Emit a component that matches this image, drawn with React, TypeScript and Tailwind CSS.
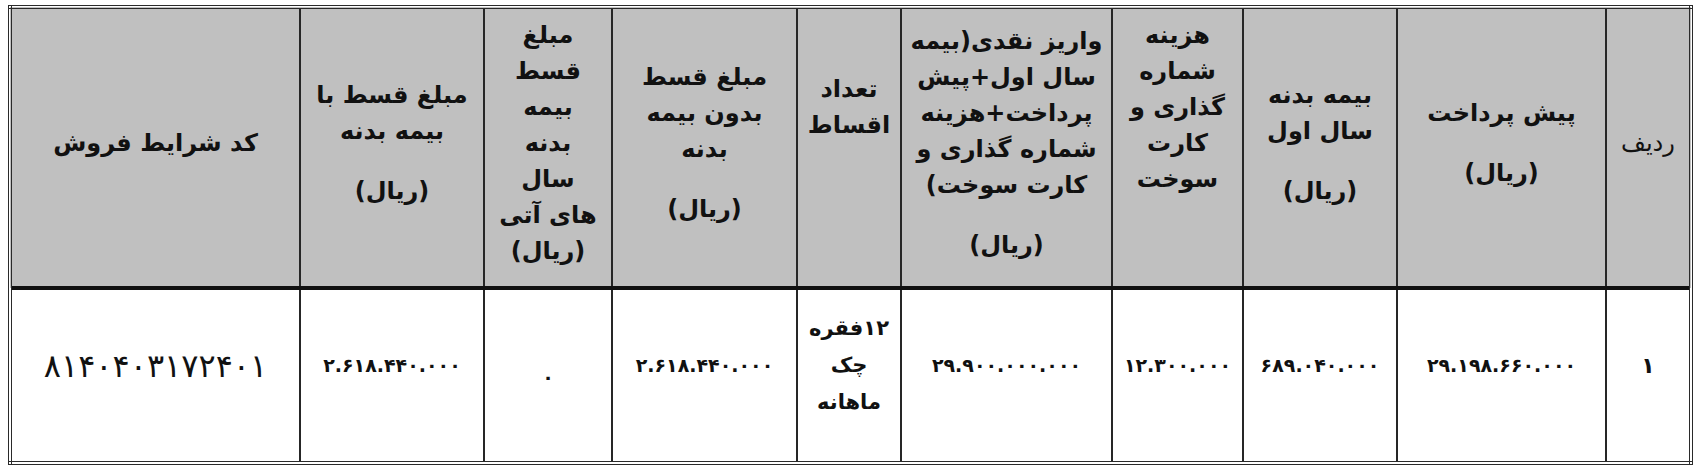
const cols = [85, 209, 154, 131, 211, 104, 185, 128, 184, 290]

type Head = { lines: string[]; rial?: "gap" | "tight"; blank?: number; regular?: boolean }

const heads: Head[] = [
  { lines: ["ردیف"], regular: true },
  { lines: ["پیش پرداخت"], rial: "gap" },
  { lines: ["بیمه بدنه", "سال اول"], rial: "gap" },
  { lines: ["هزینه", "شماره", "گذاری و", "کارت", "سوخت"], blank: 2 },
  { lines: ["واریز نقدی(بیمه", "سال اول+پیش", "پرداخت+هزینه", "شماره گذاری و", "کارت سوخت)"], rial: "gap" },
  { lines: ["تعداد", "اقساط"], blank: 2 },
  { lines: ["مبلغ قسط", "بدون بیمه", "بدنه"], rial: "gap" },
  { lines: ["مبلغ", "قسط", "بیمه", "بدنه", "سال", "های آتی"], rial: "tight" },
  { lines: ["مبلغ قسط با", "بیمه بدنه"], rial: "gap" },
  { lines: ["کد شرایط فروش"] },
]

const row = [
  "۱",
  "۲۹.۱۹۸.۶۶۰.۰۰۰",
  "۶۸۹.۰۴۰.۰۰۰",
  "۱۲.۳۰۰.۰۰۰",
  "۲۹.۹۰۰.۰۰۰.۰۰۰",
  "",
  "۲.۶۱۸.۴۴۰.۰۰۰",
  "۰",
  "۲.۶۱۸.۴۴۰.۰۰۰",
  "۸۱۴۰۴۰۳۱۷۲۴۰۱",
]

export default function App() {
  return (
    <div className="w-[1701px] h-[473px] bg-white pt-[5px] pl-[8px] font-['DejaVu_Sans',sans-serif] text-[#111]">
      <table
        dir="rtl"
        className="table-fixed border-collapse border-[4px] border-double border-[#2a2a2a] w-[1681px]"
      >
        <colgroup>
          {cols.map((w, i) => (
            <col key={i} style={{ width: w }} />
          ))}
        </colgroup>
        <thead>
          <tr className="h-[281px] bg-[#c0c0c0]">
            {heads.map((h, i) => (
              <th
                key={i}
                className={`border-2 border-b-[4px] border-[#262626] border-b-[#111] align-middle text-center px-1 pb-[10px] text-[24px] leading-[36px] ${
                  h.regular ? "font-normal" : "font-bold"
                }`}
              >
                {h.lines.map((l, j) => (
                  <div key={j} className="whitespace-nowrap">
                    {l}
                  </div>
                ))}
                {h.rial === "gap" && <div className="mt-[24px]">(ریال)</div>}
                {h.rial === "tight" && <div>(ریال)</div>}
                {h.blank === 2 && <div className="h-[72px]" />}
              </th>
            ))}
          </tr>
        </thead>
        <tbody>
          <tr className="h-[175px] bg-white">
            {row.map((v, i) => (
              <td
                key={i}
                className={`border-2 border-[#262626] align-middle text-center ${
                  i === 7 ? "pt-[4px]" : "pb-[20px]"
                } ${
                  i === 9
                    ? "text-[32px] tracking-[2.5px] font-normal"
                    : i === 0
                      ? "text-[22px] font-bold"
                      : "text-[19px] font-bold"
                }`}
              >
                {i === 5 ? (
                  <div className="text-[21px] leading-[37px]">
                    <div>۱۲فقره</div>
                    <div>چک</div>
                    <div>ماهانه</div>
                  </div>
                ) : (
                  v
                )}
              </td>
            ))}
          </tr>
        </tbody>
      </table>
    </div>
  )
}
